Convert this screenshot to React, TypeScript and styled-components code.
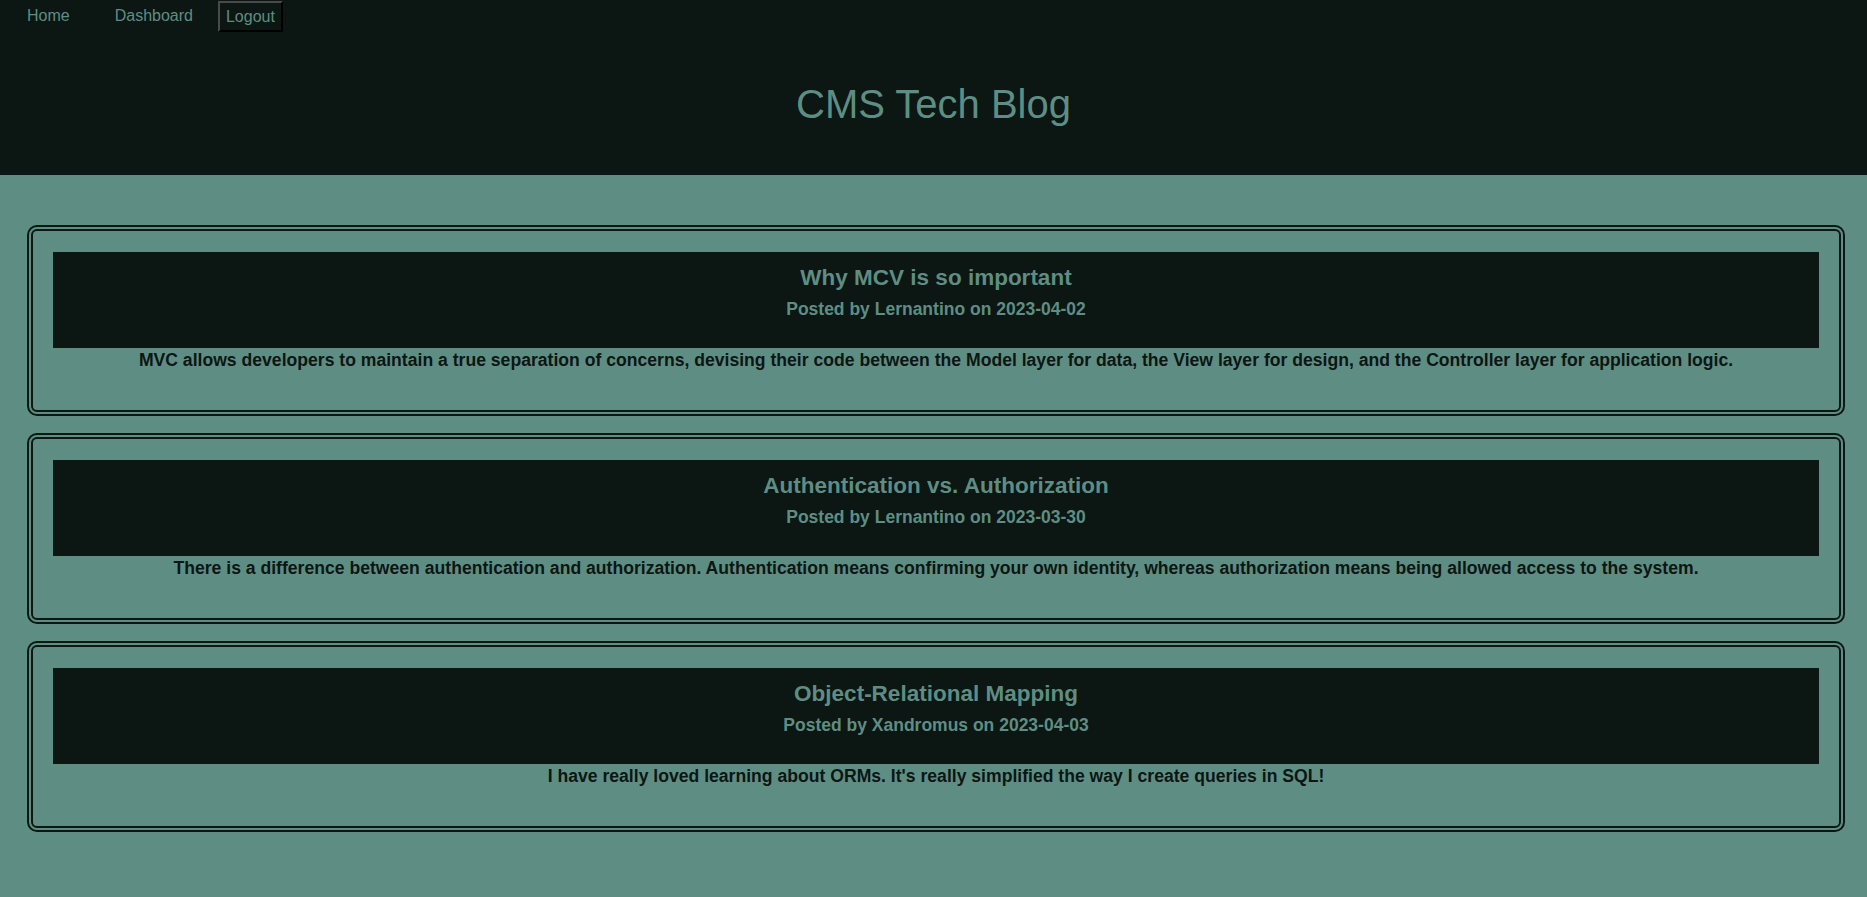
import React from "react";
import styled, { createGlobalStyle } from "styled-components";

const dark = "#0c1613";
const teal = "#5e8e83";

const Global = createGlobalStyle`
  html, body { margin: 0; padding: 0; background: ${teal}; }
  body { font-family: "Liberation Sans", Arial, sans-serif; }
`;

const Header = styled.header`
  background: ${dark};
  height: 175px;
  display: flex;
  flex-direction: column;
`;

const Nav = styled.nav`
  display: flex;
  align-items: center;
  height: 32px;
  padding-left: 27px;
`;

const NavLink = styled.a<{ $gap: number }>`
  color: ${teal};
  font-size: 16px;
  text-decoration: none;
  margin-right: ${(p) => p.$gap}px;
`;

const NavButton = styled.button`
  background: ${dark};
  color: ${teal};
  font-family: "Liberation Sans", Arial, sans-serif;
  font-size: 16px;
  height: 31px;
  padding: 0 6px;
  margin-top: 1px;
  border: 2px outset #4a4a4a;
  border-right-color: #050a09;
  border-bottom-color: #050a09;
  align-self: flex-start;
`;

const Title = styled.h1`
  margin: 0;
  margin-top: 49px;
  text-align: center;
  font-weight: normal;
  font-size: 40px;
  line-height: 46px;
  color: ${teal};
`;

const Main = styled.main`
  padding: 50px 22px 0 27px;
  display: flex;
  flex-direction: column;
  gap: 17px;
`;

const Card = styled.article`
  border: 6px double ${dark};
  border-radius: 10px;
  padding: 21px 20px 40px;
`;

const CardHead = styled.div`
  background: ${dark};
  height: 96px;
  box-sizing: border-box;
  padding-top: 13px;
  text-align: center;
`;

const CardTitle = styled.h2`
  margin: 0;
  font-size: 22.5px;
  line-height: 26px;
  font-weight: bold;
  color: ${teal};
`;

const CardMeta = styled.p`
  margin: 8px 0 0;
  font-size: 17.5px;
  line-height: 20px;
  font-weight: bold;
  color: ${teal};
`;

const CardBody = styled.p`
  margin: 2px 0 0;
  text-align: center;
  font-size: 17.6px;
  line-height: 20px;
  font-weight: bold;
  color: ${dark};
`;

const posts = [
  {
    title: "Why MCV is so important",
    author: "Lernantino",
    date: "2023-04-02",
    body: "MVC allows developers to maintain a true separation of concerns, devising their code between the Model layer for data, the View layer for design, and the Controller layer for application logic.",
  },
  {
    title: "Authentication vs. Authorization",
    author: "Lernantino",
    date: "2023-03-30",
    body: "There is a difference between authentication and authorization. Authentication means confirming your own identity, whereas authorization means being allowed access to the system.",
  },
  {
    title: "Object-Relational Mapping",
    author: "Xandromus",
    date: "2023-04-03",
    body: "I have really loved learning about ORMs. It's really simplified the way I create queries in SQL!",
  },
];

export default function App() {
  return (
    <>
      <Global />
      <Header>
        <Nav>
          <NavLink href="#" $gap={45}>Home</NavLink>
          <NavLink href="#" $gap={25}>Dashboard</NavLink>
          <NavButton>Logout</NavButton>
        </Nav>
        <Title>CMS Tech Blog</Title>
      </Header>
      <Main>
        {posts.map((p) => (
          <Card key={p.title}>
            <CardHead>
              <CardTitle>{p.title}</CardTitle>
              <CardMeta>
                Posted by {p.author} on {p.date}
              </CardMeta>
            </CardHead>
            <CardBody>{p.body}</CardBody>
          </Card>
        ))}
      </Main>
    </>
  );
}
